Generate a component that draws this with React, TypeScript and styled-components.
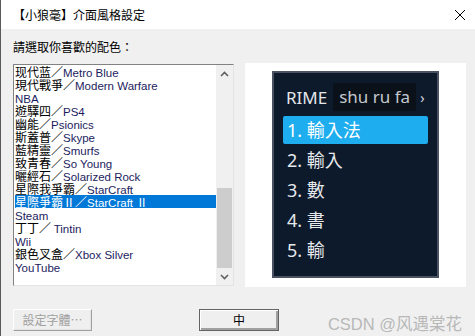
import React from 'react';
import styled, { createGlobalStyle } from 'styled-components';

const GlobalStyle = createGlobalStyle`
  html, body {
    margin: 0;
    padding: 0;
    background: #f0f0f0;
  }
`;

const SCHEMES = [
  { cn: '现代蓝／', en: 'Metro Blue' },
  { cn: '現代戰爭／', en: 'Modern Warfare' },
  { cn: '', en: 'NBA' },
  { cn: '遊驛四／', en: 'PS4' },
  { cn: '幽能／', en: 'Psionics' },
  { cn: '斯蓋普／', en: 'Skype' },
  { cn: '藍精靈／', en: 'Smurfs' },
  { cn: '致青春／', en: 'So Young' },
  { cn: '曬經石／', en: 'Solarized Rock' },
  { cn: '星際我爭霸／', en: 'StarCraft' },
  { cn: '星際爭霸Ⅱ／', en: 'StarCraft Ⅱ' },
  { cn: '', en: 'Steam' },
  { cn: '丁丁／ ', en: 'Tintin' },
  { cn: '', en: 'Wii' },
  { cn: '銀色叉盒／', en: 'Xbox Silver' },
  { cn: '', en: 'YouTube' },
];

const CANDIDATES = ['輸入法', '輸入', '數', '書', '輸'];

const SELECTED = 10;

export default function App() {
  return (
    <>
      <GlobalStyle />
      <Window>
        <TitleBar>
          <Title>【小狼毫】介面風格設定</Title>
          <CloseIcon width="12" height="12" viewBox="0 0 12 12">
            <path d="M1 1 L11 11 M11 1 L1 11" stroke="#000" strokeWidth="1" fill="none" />
          </CloseIcon>
        </TitleBar>
        <Body>
          <Label>請選取你喜歡的配色：</Label>
          <MainRow>
            <ListBox>
              <Items>
                {SCHEMES.map((s, idx) => (
                  <Item key={s.en} selected={idx === SELECTED}>
                    {s.cn}
                    <Latin>{s.en}</Latin>
                  </Item>
                ))}
              </Items>
              <ScrollBar>
                <ArrowButton>
                  <svg width="9" height="6" viewBox="0 0 9 6">
                    <path d="M1 5 L4.5 1.5 L8 5" stroke="#606060" strokeWidth="1.6" fill="none" />
                  </svg>
                </ArrowButton>
                <Track>
                  <Thumb />
                </Track>
                <ArrowButton>
                  <svg width="9" height="6" viewBox="0 0 9 6">
                    <path d="M1 1 L4.5 4.5 L8 1" stroke="#606060" strokeWidth="1.6" fill="none" />
                  </svg>
                </ArrowButton>
              </ScrollBar>
            </ListBox>
            <PreviewPanel>
              <CandidateBox>
                <PreeditRow>
                  <Brand>RIME</Brand>
                  <Preedit>shu ru fa</Preedit>
                  <Caret>›</Caret>
                </PreeditRow>
                <CandidateList>
                  {CANDIDATES.map((c, idx) => (
                    <Candidate key={idx} highlighted={idx === 0}>
                      {idx + 1}. {c}
                    </Candidate>
                  ))}
                </CandidateList>
              </CandidateBox>
            </PreviewPanel>
          </MainRow>
          <BottomRow>
            <DisabledButton>設定字體…</DisabledButton>
            <DefaultButton>中</DefaultButton>
            <Watermark>CSDN @风遇棠花</Watermark>
          </BottomRow>
        </Body>
      </Window>
    </>
  );
}

const Window = styled.div`
  width: 475px;
  height: 336px;
  box-sizing: border-box;
  border-left: 1px solid #5a5a5a;
  background: #f0f0f0;
  display: flex;
  flex-direction: column;
  overflow: hidden;
  font-family: 'Noto Sans CJK TC', 'Noto Sans', sans-serif;
  font-size: 12px;
  color: #000;
`;

const TitleBar = styled.div`
  height: 29px;
  background: #fff;
  display: flex;
  align-items: center;
  justify-content: space-between;
  padding: 0 9px 0 12px;
  flex-shrink: 0;
`;

const Title = styled.div`
  font-size: 12px;
  line-height: 14px;
`;

const CloseIcon = styled.svg`
  display: block;
`;

const Body = styled.div`
  display: flex;
  flex-direction: column;
  padding: 0 9px 0 12px;
`;

const Label = styled.div`
  margin-top: 11px;
  line-height: 14px;
  height: 14px;
`;

const MainRow = styled.div`
  display: flex;
  align-items: flex-start;
  margin-top: 10px;
`;

const ListBox = styled.div`
  width: 221px;
  height: 222px;
  box-sizing: border-box;
  background: #fff;
  border-top: 1px solid #828282;
  border-left: 1px solid #828282;
  border-right: 1px solid #e3e3e3;
  border-bottom: 1px solid #e3e3e3;
  display: flex;
`;

const Items = styled.div`
  width: 201px;
  margin-left: 1px;
  display: flex;
  flex-direction: column;
`;

const Item = styled.div<{ selected: boolean }>`
  height: 13px;
  line-height: 13px;
  white-space: nowrap;
  color: ${(p) => (p.selected ? '#fff' : '#000')};
  background: ${(p) => (p.selected ? '#0078d7' : 'transparent')};

  span {
    color: ${(p) => (p.selected ? '#fff' : '#1c1c5e')};
  }
`;

const Latin = styled.span`
  font-family: 'Liberation Sans', 'Noto Sans CJK TC', sans-serif;
  font-size: 11.5px;
`;

const ScrollBar = styled.div`
  width: 17px;
  margin-left: auto;
  background: #f0f0f0;
  display: flex;
  flex-direction: column;
`;

const ArrowButton = styled.div`
  height: 17px;
  display: flex;
  align-items: center;
  justify-content: center;
  flex-shrink: 0;
`;

const Track = styled.div`
  flex: 1;
  display: flex;
  flex-direction: column;
  justify-content: flex-end;
`;

const Thumb = styled.div`
  height: 80px;
  width: 15px;
  margin-left: 1px;
  background: #cdcdcd;
`;

const PreviewPanel = styled.div`
  width: 221px;
  height: 224px;
  margin-left: 11px;
  margin-top: -1px;
  background: #fff;
  box-sizing: border-box;
  padding-top: 8px;
  display: flex;
  justify-content: center;
  align-items: flex-start;
`;

const CandidateBox = styled.div`
  width: 167px;
  height: 207px;
  box-sizing: border-box;
  border: 2px solid #4a5262;
  background: #0c1a2b;
  padding: 10px 9px;
  display: flex;
  flex-direction: column;
  font-family: 'Noto Sans', 'Noto Sans CJK TC', sans-serif;
`;

const PreeditRow = styled.div`
  height: 28px;
  display: flex;
  align-items: center;
  padding-left: 3px;
`;

const Brand = styled.span`
  font-size: 17px;
  color: #e4e6ea;
`;

const Preedit = styled.span`
  margin-left: 6px;
  height: 28px;
  line-height: 28px;
  padding: 0 6px;
  font-size: 17px;
  color: #c4c8ce;
  background: #0a1119;
  border-radius: 2px;
`;

const Caret = styled.span`
  margin-left: 4px;
  font-size: 14px;
  color: #d8dbe0;
`;

const CandidateList = styled.div`
  margin-top: 5px;
  display: flex;
  flex-direction: column;
  gap: 2px;
`;

const Candidate = styled.div<{ highlighted: boolean }>`
  height: 28px;
  line-height: 28px;
  padding-left: 4px;
  font-size: 18px;
  color: ${(p) => (p.highlighted ? '#ffffff' : '#e6e8ec')};
  background: ${(p) => (p.highlighted ? '#1eadee' : 'transparent')};
  border-radius: 2px;
`;

const BottomRow = styled.div`
  display: flex;
  align-items: center;
  margin-top: 17px;
`;

const ButtonBase = styled.div`
  width: 80px;
  height: 22px;
  box-sizing: border-box;
  display: flex;
  align-items: center;
  justify-content: center;
  font-size: 12px;
  background: #efefef;
`;

const DisabledButton = styled(ButtonBase)`
  width: 79px;
  color: #a0a0a0;
  border-top: 1px solid #ffffff;
  border-left: 1px solid #ffffff;
  border-right: 1px solid #a0a0a0;
  border-bottom: 1px solid #a0a0a0;
  box-shadow: inset -1px -1px 0 #e3e3e3;
`;

const DefaultButton = styled(ButtonBase)`
  margin-left: 107px;
  color: #000;
  border: 1px solid #646464;
  box-shadow: inset 1px 1px 0 #ffffff, inset -2px -2px 0 #a0a0a0;
`;

const Watermark = styled.div`
  margin-left: auto;
  margin-right: 4px;
  margin-top: 7px;
  font-family: 'Liberation Sans', 'Noto Sans CJK SC', sans-serif;
  font-size: 16.5px;
  color: #b8b8b8;
`;
